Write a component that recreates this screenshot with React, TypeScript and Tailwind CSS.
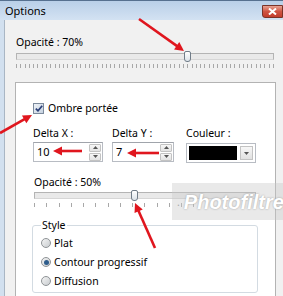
import React from "react";

const RED = "#e0161e";

function Arrow({ x1, y1, x2, y2 }: { x1: number; y1: number; x2: number; y2: number }) {
  const dx = x2 - x1;
  const dy = y2 - y1;
  const len = Math.hypot(dx, dy);
  const ux = dx / len;
  const uy = dy / len;
  const hl = 9;
  const hw = 4.5;
  const bx = x2 - ux * hl;
  const by = y2 - uy * hl;
  const pts = `${x2},${y2} ${bx - uy * hw},${by + ux * hw} ${bx + uy * hw},${by - ux * hw}`;
  return (
    <g>
      <line x1={x1} y1={y1} x2={bx + ux} y2={by + uy} stroke={RED} strokeWidth={2.6} />
      <polygon points={pts} fill={RED} />
    </g>
  );
}

function Slider({ thumb, ticks, className }: { thumb: number; ticks: number; className: string }) {
  return (
    <div className={className}>
      <div className="relative h-[11px]">
        <div className="absolute left-0 right-0 top-[2px] h-[7px] border border-[#b4b4b4] border-b-[#d6d6d6] bg-[#e9e9e9]" />
        <div
          className="absolute top-0 h-[11px] w-[7px] rounded-t-[2px] rounded-b-[3px] border border-[#707c88] bg-gradient-to-b from-white to-[#dbe2e8]"
          style={{ left: thumb }}
        />
      </div>
      <div className="mt-[2px] flex h-[4px] justify-between">
        {Array.from({ length: ticks }, (_, i) => (
          <span key={i} className="w-px bg-[#a8a8a8]" />
        ))}
      </div>
    </div>
  );
}

function Spinner() {
  return (
    <div className="ml-auto mr-[1px] flex flex-col gap-[1px]">
      {[0, 1].map((i) => (
        <div
          key={i}
          className="flex h-[8px] w-[12px] items-center justify-center rounded-[1px] border border-[#c3c3c3] bg-gradient-to-b from-[#f7f7f7] to-[#e3e3e3]"
        >
          <svg width="5" height="3" viewBox="0 0 5 3">
            <path d={i === 0 ? "M0 3 L2.5 0 L5 3 Z" : "M0 0 L2.5 3 L5 0 Z"} fill="#555" />
          </svg>
        </div>
      ))}
    </div>
  );
}

function NumberBox({ value }: { value: string }) {
  return (
    <div className="mt-[1px] flex h-[20px] items-center border border-[#b8bcc3] border-t-[#a0a4ab] bg-white pl-[3px] text-[11px]">
      <span>{value}</span>
      <Spinner />
    </div>
  );
}

function Radio({ label, checked }: { label: string; checked?: boolean }) {
  return (
    <div className="flex h-[16px] items-center gap-[3px]">
      <span className="flex h-[10px] w-[10px] items-center justify-center rounded-full border border-[#8f9396] bg-gradient-to-br from-[#f4f4f4] to-[#c9cdd0]">
        {checked && <span className="h-[5px] w-[5px] rounded-full bg-[#2f5d8c]" />}
      </span>
      <span>{label}</span>
    </div>
  );
}

export default function App() {
  return (
    <div className="relative h-[296px] w-[283px] overflow-hidden bg-[#f1f1f1] font-['Noto_Sans',sans-serif] text-[10.5px] leading-[16px] text-black">
      {/* title bar */}
      <div className="flex h-[20px] items-start border-t border-[#56708f] bg-gradient-to-b from-[#b9cfe8] to-[#d3e2f2]">
        <span className="mt-[2px] pl-[5px] text-[11px]">Options</span>
        <div className="ml-auto mt-[4px] flex h-[13px] w-[21px] items-center justify-center rounded-bl-[3px] border border-[#7a3328] bg-gradient-to-b from-[#e6a192] via-[#cf5443] to-[#c23d2c]">
          <svg width="9" height="7" viewBox="0 0 9 7">
            <path d="M1 0.5 L8 6.5 M8 0.5 L1 6.5" stroke="white" strokeWidth="2" />
          </svg>
        </div>
      </div>

      <div className="flex h-[276px]">
        <div className="w-[5px] shrink-0 border-r border-[#a9b6c4] bg-[#d2e0ef]" />
        <div className="flex-1 pl-[11px] pt-[14px]">
          <div>Opacité : 70%</div>
          <Slider className="mt-[1px] w-[258px]" thumb={168} ticks={61} />

          <div className="ml-[-1px] mt-[14px] h-[230px] w-[261px] border border-[#b3b3b3] bg-white pl-[17px] pt-[17px]">
            <div className="flex h-[16px] items-center gap-[4px]">
              <span className="flex h-[11px] w-[11px] items-center justify-center border border-[#7c8a9c] bg-gradient-to-br from-[#eef2f7] to-[#c6d2e0]">
                <svg width="8" height="7" viewBox="0 0 8 7">
                  <path d="M0.8 3.6 L3 5.8 L7.2 0.8" stroke="#2b3f78" strokeWidth="1.7" fill="none" />
                </svg>
              </span>
              <span>Ombre portée</span>
            </div>

            <div className="mt-[9px] flex">
              <div className="w-[70px]">
                <div>Delta X :</div>
                <NumberBox value="10" />
              </div>
              <div className="ml-[9px] w-[62px]">
                <div>Delta Y :</div>
                <NumberBox value="7" />
              </div>
              <div className="ml-[12px] w-[70px]">
                <div>Couleur :</div>
                <div className="mt-[2px] flex h-[20px] gap-[3px] border border-[#b8bcc3] bg-white p-[2px]">
                  <div className="flex-1 bg-black" />
                  <div className="flex w-[13px] items-center justify-center border border-[#c3c3c3] bg-gradient-to-b from-[#f7f7f7] to-[#e1e1e1]">
                    <svg width="5" height="3" viewBox="0 0 5 3">
                      <path d="M0 0 L2.5 3 L5 0 Z" fill="#555" />
                    </svg>
                  </div>
                </div>
              </div>
            </div>

            <div className="mt-[11px] pl-[1px]">Opacité : 50%</div>
            <Slider className="ml-[1px] w-[222px]" thumb={97} ticks={19} />

            <fieldset className="ml-[-1px] mt-[10px] w-[226px] rounded-[3px] border border-[#d3dbe2] pb-[3px] pl-[8px] pt-[2px]">
              <legend className="px-[1px] leading-[16px]">Style</legend>
              <div className="flex flex-col gap-[3px]">
                <Radio label="Plat" />
                <Radio label="Contour progressif" checked />
                <Radio label="Diffusion" />
              </div>
            </fieldset>
          </div>
        </div>
      </div>

      {/* watermark */}
      <div className="absolute left-[172px] top-[183px] flex h-[37px] w-[111px] items-center overflow-hidden whitespace-nowrap bg-[#c8c8c8]/40 pl-[5px]">
        <span className="text-[#aaa]">.</span>
        <span className="ml-[4px] font-['Liberation_Sans',sans-serif] text-[20px] font-bold italic text-white [text-shadow:0_0_2px_#9a9a9a]">
          Photofiltre
        </span>
      </div>

      {/* annotations */}
      <svg className="pointer-events-none absolute inset-0" width="283" height="296">
        <Arrow x1={139} y1={19} x2={184} y2={51} />
        <Arrow x1={0} y1={133} x2={32} y2={115} />
        <Arrow x1={82} y1={151} x2={53} y2={151} />
        <Arrow x1={159} y1={153} x2={127} y2={153} />
        <Arrow x1={155} y1={248} x2={135} y2={203} />
      </svg>
    </div>
  );
}
